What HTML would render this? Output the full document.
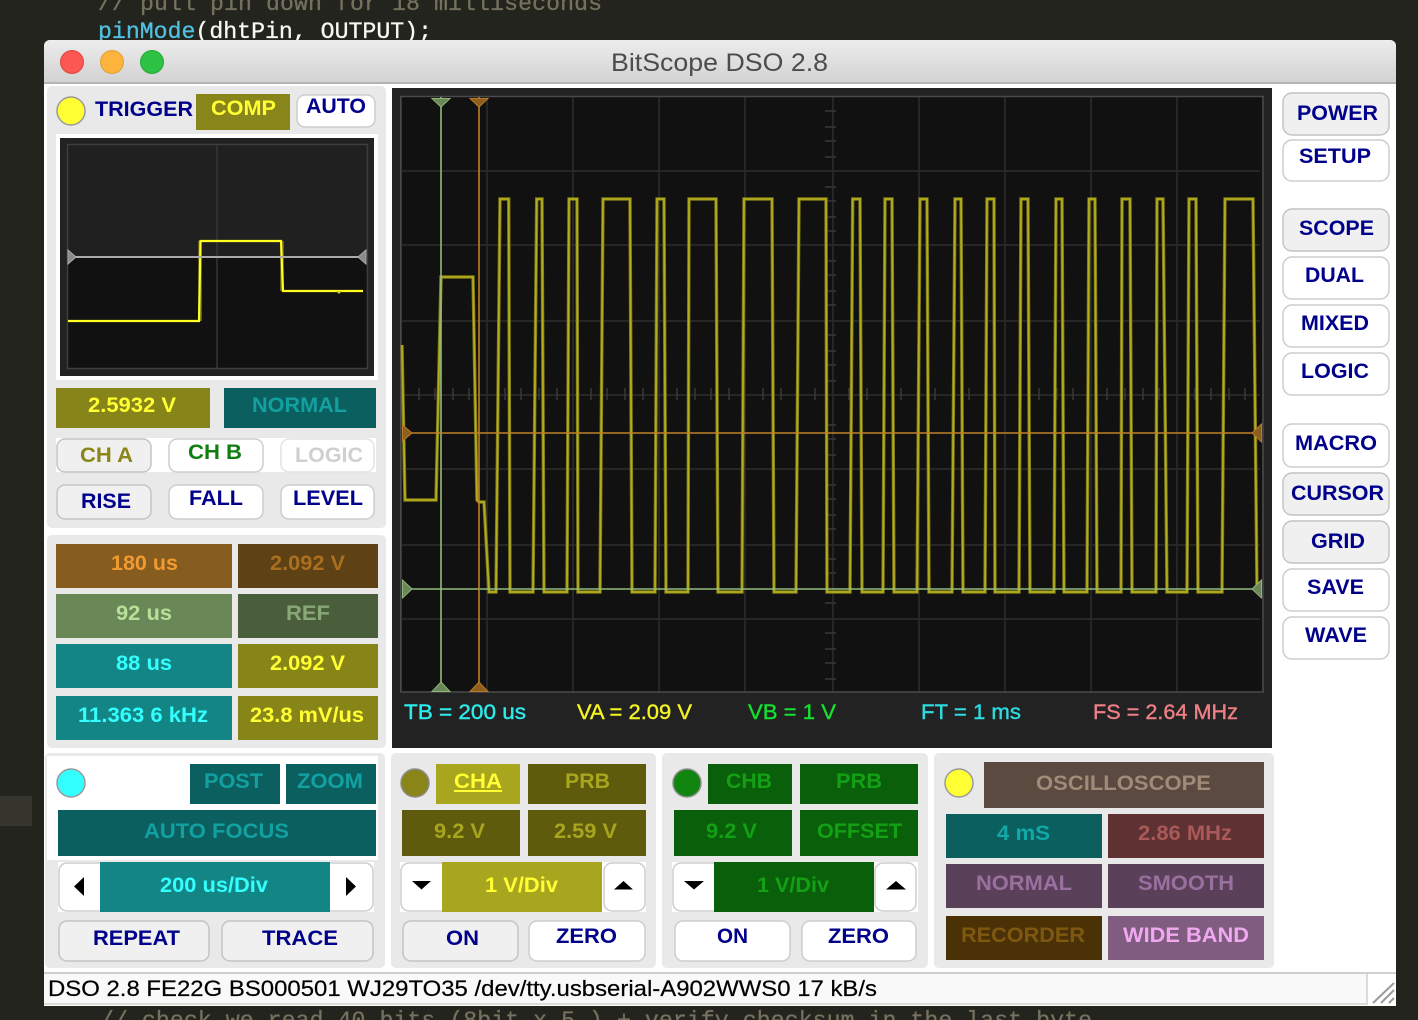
<!DOCTYPE html>
<html><head><meta charset="utf-8"><title>BitScope DSO 2.8</title>
<style>
html,body{margin:0;padding:0;background:#24241f;width:1418px;height:1020px;overflow:hidden}
svg{display:block;filter:blur(.3px)}
text{font-family:"Liberation Sans",sans-serif;font-weight:bold;font-size:21.5px}
.n{fill:#00008b}
.m{font-family:"Liberation Mono",monospace;font-weight:normal;font-size:23.2px;stroke-width:.3px}
.r{font-weight:normal;stroke-width:.4px}
.w{fill:#fff;stroke:#cdcdcd;stroke-width:1.5}
.g{fill:#f0f0f0;stroke:#c4c4c4;stroke-width:1.5}
.p{fill:#e9e9e9}
</style></head><body>
<svg width="1418" height="1020" viewBox="0 0 1418 1020" xmlns="http://www.w3.org/2000/svg">
<rect width="1418" height="1020" fill="#24241f"/>
<rect x="0" y="796" width="32" height="30" fill="#36352e"/>
<text class="m" x="98" y="10" fill="#75715e" stroke="#75715e" textLength="504">// pull pin down for 18 milliseconds</text>
<text class="m" x="98" y="38" fill="#f8f8f2" stroke="#f8f8f2" textLength="334"><tspan fill="#4fc1e0" stroke="#4fc1e0">pinMode</tspan>(dhtPin, OUTPUT);</text>
<text class="m" x="100" y="1027" fill="#75715e" stroke="#75715e" textLength="992">// check we read 40 bits (8bit x 5 ) + verify checksum in the last byte</text>

<!-- window -->
<path d="M44 46a6 6 0 0 1 6-6H1390a6 6 0 0 1 6 6V1006H44Z" fill="#fff"/>
<defs><linearGradient id="tb" x1="0" y1="0" x2="0" y2="1"><stop offset="0" stop-color="#ececec"/><stop offset="1" stop-color="#d2d2d2"/></linearGradient></defs>
<path d="M44 46a6 6 0 0 1 6-6H1390a6 6 0 0 1 6 6V83H44Z" fill="url(#tb)"/>
<rect x="44" y="82" width="1352" height="2" fill="#b4b4b4"/>
<circle cx="72" cy="62" r="11.5" fill="#fc5753" stroke="#e0443e"/>
<circle cx="112" cy="62" r="11.5" fill="#fdb43c" stroke="#dea034"/>
<circle cx="152" cy="62" r="11.5" fill="#2dc244" stroke="#27aa3a"/>
<text class="r" x="611" y="71" style="font-size:25px" fill="#4c4c4c" textLength="217" lengthAdjust="spacingAndGlyphs">BitScope DSO 2.8</text>

<!-- trigger panel -->
<rect class="p" x="47" y="86" width="339" height="442" rx="5"/>
<circle cx="71" cy="111" r="14" fill="#ffff33" stroke="#999" stroke-width="1.5"/>
<text class="n" x="95" y="116" textLength="98" lengthAdjust="spacingAndGlyphs">TRIGGER</text>
<rect x="196" y="94" width="94" height="36" fill="#88851a"/>
<text x="211" y="115" fill="#ffff33" textLength="65" lengthAdjust="spacingAndGlyphs">COMP</text>
<rect class="w" x="297" y="95" width="78" height="32" rx="8"/>
<text class="n" x="306" y="113" textLength="60" lengthAdjust="spacingAndGlyphs">AUTO</text>

<rect x="56" y="134" width="322" height="246" fill="#fff"/>
<rect x="60" y="138" width="314" height="238" fill="#222"/>
<rect x="68" y="145" width="299" height="112" fill="#202020"/>
<rect x="68" y="257" width="299" height="111" fill="#111"/>
<path d="M67.500 144V369M367.500 144V369M67 144.500H368M67 368.500H368" stroke="#3d3d3d" stroke-width="1.5" fill="none"/>
<path d="M217 145V368" stroke="#363636" stroke-width="1.5"/>
<path d="M200 241V321" stroke="#77741a" stroke-width="3.500" fill="none"/>
<path d="M282 241V291" stroke="#77741a" stroke-width="3.500" fill="none"/>
<path d="M68 321H199L200.500 241H281L283 291H363" stroke="#ffff22" stroke-width="2.200" fill="none"/>
<path d="M337 291l2 2l2 -2" stroke="#c8c81c" stroke-width="1.5" fill="none"/>
<path d="M68 257H362" stroke="#ababab" stroke-width="2"/>
<path d="M68 250L76 257L68 264Z M366 250L358 257L366 264Z" fill="#8a8a8a" stroke="#aaa"/>

<rect x="56" y="388" width="154" height="40" fill="#878519"/>
<text x="88" y="412" fill="#ffff33" textLength="88" lengthAdjust="spacingAndGlyphs">2.5932 V</text>
<rect x="224" y="388" width="152" height="40" fill="#0b605f"/>
<text x="252" y="412" fill="#12a0a0" textLength="95" lengthAdjust="spacingAndGlyphs">NORMAL</text>

<rect x="56" y="438" width="320" height="34" fill="#fff"/>
<rect class="g" x="57" y="439" width="94" height="33" rx="8"/>
<text x="80" y="462" fill="#8a8618" textLength="53" lengthAdjust="spacingAndGlyphs">CH A</text>
<rect class="w" x="169" y="439" width="94" height="33" rx="8"/>
<text x="188" y="459" fill="#0f7f0f" textLength="54" lengthAdjust="spacingAndGlyphs">CH B</text>
<rect x="281" y="439" width="93" height="33" rx="8" fill="#fff" stroke="#e4e4e4" stroke-width="1.500"/>
<text x="295" y="462" fill="#cfcfcf" textLength="68" lengthAdjust="spacingAndGlyphs">LOGIC</text>
<rect class="g" x="57" y="485" width="94" height="34" rx="8"/>
<text class="n" x="81" y="508" textLength="50" lengthAdjust="spacingAndGlyphs">RISE</text>
<rect class="w" x="169" y="485" width="94" height="34" rx="8"/>
<text class="n" x="189" y="505" textLength="54" lengthAdjust="spacingAndGlyphs">FALL</text>
<rect class="w" x="281" y="485" width="93" height="34" rx="8"/>
<text class="n" x="293" y="505" textLength="70" lengthAdjust="spacingAndGlyphs">LEVEL</text>

<!-- readouts -->
<rect class="p" x="47" y="535" width="339" height="213" rx="5"/>
<rect x="56" y="544" width="176" height="44" fill="#865c1f"/>
<text x="111" y="570" fill="#f09a30" textLength="67" lengthAdjust="spacingAndGlyphs">180 us</text>
<rect x="238" y="544" width="140" height="44" fill="#5e4114"/>
<text x="270" y="570" fill="#aa7020" textLength="75" lengthAdjust="spacingAndGlyphs">2.092 V</text>
<rect x="56" y="594" width="176" height="44" fill="#6a8758"/>
<text x="116" y="620" fill="#b8e098" textLength="56" lengthAdjust="spacingAndGlyphs">92 us</text>
<rect x="238" y="594" width="140" height="44" fill="#4b5e3c"/>
<text x="286" y="620" fill="#88a878" textLength="44" lengthAdjust="spacingAndGlyphs">REF</text>
<rect x="56" y="644" width="176" height="44" fill="#138585"/>
<text x="116" y="670" fill="#33ffff" textLength="56" lengthAdjust="spacingAndGlyphs">88 us</text>
<rect x="238" y="644" width="140" height="44" fill="#888518"/>
<text x="270" y="670" fill="#ffff33" textLength="75" lengthAdjust="spacingAndGlyphs">2.092 V</text>
<rect x="56" y="696" width="176" height="44" fill="#138585"/>
<text x="78" y="722" fill="#33ffff" textLength="130" lengthAdjust="spacingAndGlyphs">11.363 6 kHz</text>
<rect x="238" y="696" width="140" height="44" fill="#888518"/>
<text x="250" y="722" fill="#ffff33" textLength="114" lengthAdjust="spacingAndGlyphs">23.8 mV/us</text>

<!-- scope -->
<rect x="392" y="88" width="880" height="660" fill="#222"/>
<rect x="402" y="97" width="860" height="595" fill="#111"/>
<path d="M487 97V692M573 97V692M659 97V692M745 97V692M833 97V692M919 97V692M1005 97V692M1091 97V692M1177 97V692M402 171H1260M402 245H1260M402 321H1260M402 395H1260M402 469H1260M402 545H1260M402 619H1260" stroke="#2d2d2d" stroke-width="1.5" fill="none"/>
<path d="M825 111h11M825 127h11M825 141h11M825 157h11M825 187h11M825 201h11M825 217h11M825 231h11M825 261h11M825 275h11M825 291h11M825 305h11M825 335h11M825 351h11M825 365h11M825 381h11M825 425h11M825 439h11M825 455h11M825 485h11M825 499h11M825 515h11M825 529h11M825 559h11M825 573h11M825 603h11M825 633h11M825 649h11M825 663h11M825 679h11M419 388v12M435 388v12M453 388v12M469 388v12M505 388v12M521 388v12M539 388v12M557 388v12M591 388v12M607 388v12M625 388v12M643 388v12M677 388v12M695 388v12M711 388v12M729 388v12M763 388v12M781 388v12M797 388v12M815 388v12M849 388v12M867 388v12M883 388v12M901 388v12M935 388v12M953 388v12M969 388v12M987 388v12M1021 388v12M1039 388v12M1057 388v12M1073 388v12M1107 388v12M1125 388v12M1143 388v12M1159 388v12M1195 388v12M1211 388v12M1229 388v12M1245 388v12" stroke="#383838" stroke-width="1.500" fill="none"/>
<path d="M400.750 96V692M1263 96V692M400 692H1264M400 96.500H1264" stroke="#4a4a4a" stroke-width="1.5" fill="none"/>
<path d="M402 345L405 500H436L441 277H473L477 500L479 502H484L489 592H496L500 199H508.700L510 592H533L536.700 199H542L544 592H567L569 199H577L578 592H600L603 199H630L632 592H655L657 199H664L666 592H688L689 199H716L718 592H742L744 199H772L774 592H796L799 199H826L827 592H850L852.700 199H860L862 592H883L885 199H892L894 592H917L920 199H927L929 592H952L955 199H961L963 592H985L987 199H994L995 592H1019L1021 199H1028L1030 592H1054L1056 199H1062L1064 592H1087L1089 199H1095L1097 592H1121L1122 199H1130L1132 592H1156L1157 199H1163L1167 592H1187L1189 199H1196L1198 592H1222L1225 199H1253L1257 592" fill="none" stroke="#7a7616" stroke-width="3.400"/>
<path d="M402 345L405 500H436L441 277H473L477 500L479 502H484L489 592H496L500 199H508.700L510 592H533L536.700 199H542L544 592H567L569 199H577L578 592H600L603 199H630L632 592H655L657 199H664L666 592H688L689 199H716L718 592H742L744 199H772L774 592H796L799 199H826L827 592H850L852.700 199H860L862 592H883L885 199H892L894 592H917L920 199H927L929 592H952L955 199H961L963 592H985L987 199H994L995 592H1019L1021 199H1028L1030 592H1054L1056 199H1062L1064 592H1087L1089 199H1095L1097 592H1121L1122 199H1130L1132 592H1156L1157 199H1163L1167 592H1187L1189 199H1196L1198 592H1222L1225 199H1253L1257 592" fill="none" stroke="#b4ae1e" stroke-width="1.700"/>
<path d="M441 97V692M402 589H1262" stroke="#93bb7a" stroke-width="1.600" fill="none"/>
<path d="M479 97V692M402 433H1262" stroke="#c08028" stroke-width="1.600" fill="none"/>
<path d="M432 98.500H450L441 107ZM432 691.500H450L441 682ZM402.500 580L412 589L402.500 598ZM1261.500 580L1252 589L1261.500 598Z" fill="#6b8658" stroke="#8fb577"/>
<path d="M470 98.500H488L479 107ZM470 691.500H488L479 682ZM402.500 425L412 433L402.500 441ZM1261.500 424L1252 433L1261.500 442Z" fill="#8e5e1e" stroke="#b87a28"/>
<text class="r" x="404" y="719" fill="#2cecec" stroke="#2cecec" textLength="122" lengthAdjust="spacingAndGlyphs">TB = 200 us</text>
<text class="r" x="577" y="719" fill="#f4f424" stroke="#f4f424" textLength="115" lengthAdjust="spacingAndGlyphs">VA = 2.09 V</text>
<text class="r" x="748" y="719" fill="#14e030" stroke="#14e030" textLength="88" lengthAdjust="spacingAndGlyphs">VB = 1 V</text>
<text class="r" x="921" y="719" fill="#2cdce0" stroke="#2cdce0" textLength="100" lengthAdjust="spacingAndGlyphs">FT = 1 ms</text>
<text class="r" x="1093" y="719" fill="#ee7f86" stroke="#ee7f86" textLength="145" lengthAdjust="spacingAndGlyphs">FS = 2.64 MHz</text>

<!-- right buttons -->
<rect class="g" x="1283" y="93" width="106" height="42" rx="9"/>
<text class="n" x="1297" y="120" textLength="81" lengthAdjust="spacingAndGlyphs">POWER</text>
<rect class="w" x="1283" y="140" width="106" height="41" rx="9"/>
<text class="n" x="1299" y="163" textLength="72" lengthAdjust="spacingAndGlyphs">SETUP</text>
<rect class="g" x="1283" y="209" width="106" height="42" rx="9"/>
<text class="n" x="1299" y="235" textLength="75" lengthAdjust="spacingAndGlyphs">SCOPE</text>
<rect class="w" x="1283" y="257" width="106" height="42" rx="9"/>
<text class="n" x="1305" y="282" textLength="59" lengthAdjust="spacingAndGlyphs">DUAL</text>
<rect class="w" x="1283" y="305" width="106" height="42" rx="9"/>
<text class="n" x="1301" y="330" textLength="68" lengthAdjust="spacingAndGlyphs">MIXED</text>
<rect class="w" x="1283" y="353" width="106" height="42" rx="9"/>
<text class="n" x="1301" y="378" textLength="68" lengthAdjust="spacingAndGlyphs">LOGIC</text>
<rect class="w" x="1283" y="424" width="106" height="43" rx="9"/>
<text class="n" x="1295" y="450" textLength="82" lengthAdjust="spacingAndGlyphs">MACRO</text>
<rect class="g" x="1283" y="473" width="106" height="42" rx="9"/>
<text class="n" x="1291" y="500" textLength="93" lengthAdjust="spacingAndGlyphs">CURSOR</text>
<rect class="g" x="1283" y="521" width="106" height="42" rx="9"/>
<text class="n" x="1311" y="548" textLength="54" lengthAdjust="spacingAndGlyphs">GRID</text>
<rect class="w" x="1283" y="569" width="106" height="42" rx="9"/>
<text class="n" x="1307" y="594" textLength="57" lengthAdjust="spacingAndGlyphs">SAVE</text>
<rect class="w" x="1283" y="617" width="106" height="42" rx="9"/>
<text class="n" x="1305" y="642" textLength="62" lengthAdjust="spacingAndGlyphs">WAVE</text>

<!-- timebase panel -->
<rect class="p" x="45" y="753" width="340" height="215" rx="5"/>
<rect x="47" y="756" width="331" height="104" fill="#fff"/>
<ellipse cx="71" cy="783" rx="14" ry="14" fill="#33ffff" stroke="#999" stroke-width="1.5"/>
<rect x="190" y="764" width="90" height="40" fill="#0b605f"/>
<text x="204" y="788" fill="#12a0a0" textLength="59" lengthAdjust="spacingAndGlyphs">POST</text>
<rect x="286" y="764" width="90" height="40" fill="#0b605f"/>
<text x="297" y="788" fill="#12a0a0" textLength="66" lengthAdjust="spacingAndGlyphs">ZOOM</text>
<rect x="58" y="810" width="318" height="46" fill="#0b605f"/>
<text x="144" y="838" fill="#12a0a0" textLength="145" lengthAdjust="spacingAndGlyphs">AUTO FOCUS</text>
<rect x="58" y="862" width="316" height="50" fill="#fff"/>
<rect class="w" x="59" y="863" width="50" height="48" rx="8"/>
<rect class="w" x="323" y="863" width="50" height="48" rx="8"/>
<rect x="100" y="862" width="230" height="50" fill="#138585"/>
<text x="160" y="892" fill="#33ffff" textLength="108" lengthAdjust="spacingAndGlyphs">200 us/Div</text>
<path d="M84 877V896L74 886.500Z M346 877V896L356 886.500Z" fill="#000"/>
<rect class="g" x="59" y="921" width="150" height="40" rx="8"/>
<text class="n" x="93" y="945" textLength="87" lengthAdjust="spacingAndGlyphs">REPEAT</text>
<rect class="g" x="222" y="921" width="151" height="40" rx="8"/>
<text class="n" x="262" y="945" textLength="76" lengthAdjust="spacingAndGlyphs">TRACE</text>

<!-- CHA panel -->
<rect class="p" x="391" y="753" width="265" height="215" rx="5"/>
<circle cx="415" cy="783" r="14" fill="#8a8518" stroke="#8c8c8c" stroke-width="1.5"/>
<rect x="436" y="764" width="84" height="40" fill="#a8a51e"/>
<text x="454" y="788" fill="#ffff33" textLength="48" lengthAdjust="spacingAndGlyphs">CHA</text>
<rect x="454" y="790" width="48" height="2" fill="#ffff33"/>
<rect x="528" y="764" width="118" height="40" fill="#5e5c0c"/>
<text x="565" y="788" fill="#a8a51e" textLength="45" lengthAdjust="spacingAndGlyphs">PRB</text>
<rect x="402" y="810" width="118" height="46" fill="#5e5c0c"/>
<text x="434" y="838" fill="#a8a51e" textLength="51" lengthAdjust="spacingAndGlyphs">9.2 V</text>
<rect x="528" y="810" width="118" height="46" fill="#5e5c0c"/>
<text x="554" y="838" fill="#a8a51e" textLength="63" lengthAdjust="spacingAndGlyphs">2.59 V</text>
<rect x="400" y="862" width="246" height="50" fill="#fff"/>
<rect class="w" x="401" y="863" width="50" height="48" rx="8"/>
<rect class="w" x="604" y="863" width="41" height="48" rx="8"/>
<rect x="442" y="862" width="160" height="50" fill="#a8a51e"/>
<text x="485" y="892" fill="#ffff33" textLength="73" lengthAdjust="spacingAndGlyphs">1 V/Div</text>
<path d="M412 881H431L421.500 889.500Z M614 889.500H633L623.500 881Z" fill="#000"/>
<rect class="g" x="403" y="921" width="115" height="40" rx="8"/>
<text class="n" x="446" y="945" textLength="33" lengthAdjust="spacingAndGlyphs">ON</text>
<rect class="w" x="529" y="921" width="116" height="40" rx="8"/>
<text class="n" x="556" y="943" textLength="61" lengthAdjust="spacingAndGlyphs">ZERO</text>

<!-- CHB panel -->
<rect class="p" x="662" y="753" width="266" height="215" rx="5"/>
<circle cx="687" cy="783" r="14" fill="#108510" stroke="#8c8c8c" stroke-width="1.5"/>
<rect x="708" y="764" width="84" height="40" fill="#0a5f0a"/>
<text x="726" y="788" fill="#14a014" textLength="46" lengthAdjust="spacingAndGlyphs">CHB</text>
<rect x="800" y="764" width="118" height="40" fill="#0a5f0a"/>
<text x="836" y="788" fill="#14a014" textLength="46" lengthAdjust="spacingAndGlyphs">PRB</text>
<rect x="674" y="810" width="118" height="46" fill="#0a5f0a"/>
<text x="706" y="838" fill="#14a014" textLength="51" lengthAdjust="spacingAndGlyphs">9.2 V</text>
<rect x="800" y="810" width="118" height="46" fill="#0a5f0a"/>
<text x="817" y="838" fill="#14a014" textLength="85" lengthAdjust="spacingAndGlyphs">OFFSET</text>
<rect x="672" y="862" width="246" height="50" fill="#fff"/>
<rect class="w" x="673" y="863" width="50" height="48" rx="8"/>
<rect class="w" x="875" y="863" width="41" height="48" rx="8"/>
<rect x="714" y="862" width="160" height="50" fill="#0a5f0a"/>
<text x="757" y="892" fill="#14a014" textLength="72" lengthAdjust="spacingAndGlyphs">1 V/Div</text>
<path d="M684 881H704L694 889.500Z M886 889.500H906L896 881Z" fill="#000"/>
<rect class="w" x="675" y="921" width="115" height="40" rx="8"/>
<text class="n" x="717" y="943" textLength="31" lengthAdjust="spacingAndGlyphs">ON</text>
<rect class="w" x="802" y="921" width="114" height="40" rx="8"/>
<text class="n" x="828" y="943" textLength="61" lengthAdjust="spacingAndGlyphs">ZERO</text>

<!-- OSC panel -->
<rect class="p" x="934" y="753" width="340" height="215" rx="5"/>
<circle cx="959" cy="783" r="14" fill="#ffff33" stroke="#999" stroke-width="1.5"/>
<rect x="984" y="762" width="280" height="46" fill="#5b4a40"/>
<text x="1036" y="790" fill="#a08a78" textLength="175" lengthAdjust="spacingAndGlyphs">OSCILLOSCOPE</text>
<rect x="946" y="814" width="156" height="44" fill="#0b605f"/>
<text x="997" y="840" fill="#12a8a8" textLength="53" lengthAdjust="spacingAndGlyphs">4 mS</text>
<rect x="1108" y="814" width="156" height="44" fill="#5e3232"/>
<text x="1138" y="840" fill="#aa5858" textLength="94" lengthAdjust="spacingAndGlyphs">2.86 MHz</text>
<rect x="946" y="864" width="156" height="44" fill="#5a4058"/>
<text x="976" y="890" fill="#9a70a0" textLength="96" lengthAdjust="spacingAndGlyphs">NORMAL</text>
<rect x="1108" y="864" width="156" height="44" fill="#5a4058"/>
<text x="1138" y="890" fill="#9a70a0" textLength="96" lengthAdjust="spacingAndGlyphs">SMOOTH</text>
<rect x="946" y="916" width="156" height="44" fill="#4a3206"/>
<text x="961" y="942" fill="#7f5810" textLength="124" lengthAdjust="spacingAndGlyphs">RECORDER</text>
<rect x="1108" y="916" width="156" height="44" fill="#805c80"/>
<text x="1123" y="942" fill="#f0a8f0" textLength="126" lengthAdjust="spacingAndGlyphs">WIDE BAND</text>

<!-- status bar -->
<rect x="44" y="972" width="1352" height="2" fill="#cfcfcf"/>
<rect x="44" y="974" width="1322" height="30" fill="#f9f9f9"/>
<rect x="44" y="1003" width="1322" height="2" fill="#dcdcdc"/>
<rect x="1366" y="974" width="2" height="31" fill="#dcdcdc"/>
<text class="r" x="48" y="996" fill="#000" stroke="#000" textLength="829" lengthAdjust="spacingAndGlyphs" style="stroke-width:.2px;font-size:22px">DSO 2.8 FE22G BS000501 WJ29TO35 /dev/tty.usbserial-A902WWS0 17 kB/s</text>
<path d="M1373 1003L1394 983M1381 1003L1394 990M1389 1003L1394 998" stroke="#9a9a9a" stroke-width="2" fill="none"/>
</svg>
</body></html>
